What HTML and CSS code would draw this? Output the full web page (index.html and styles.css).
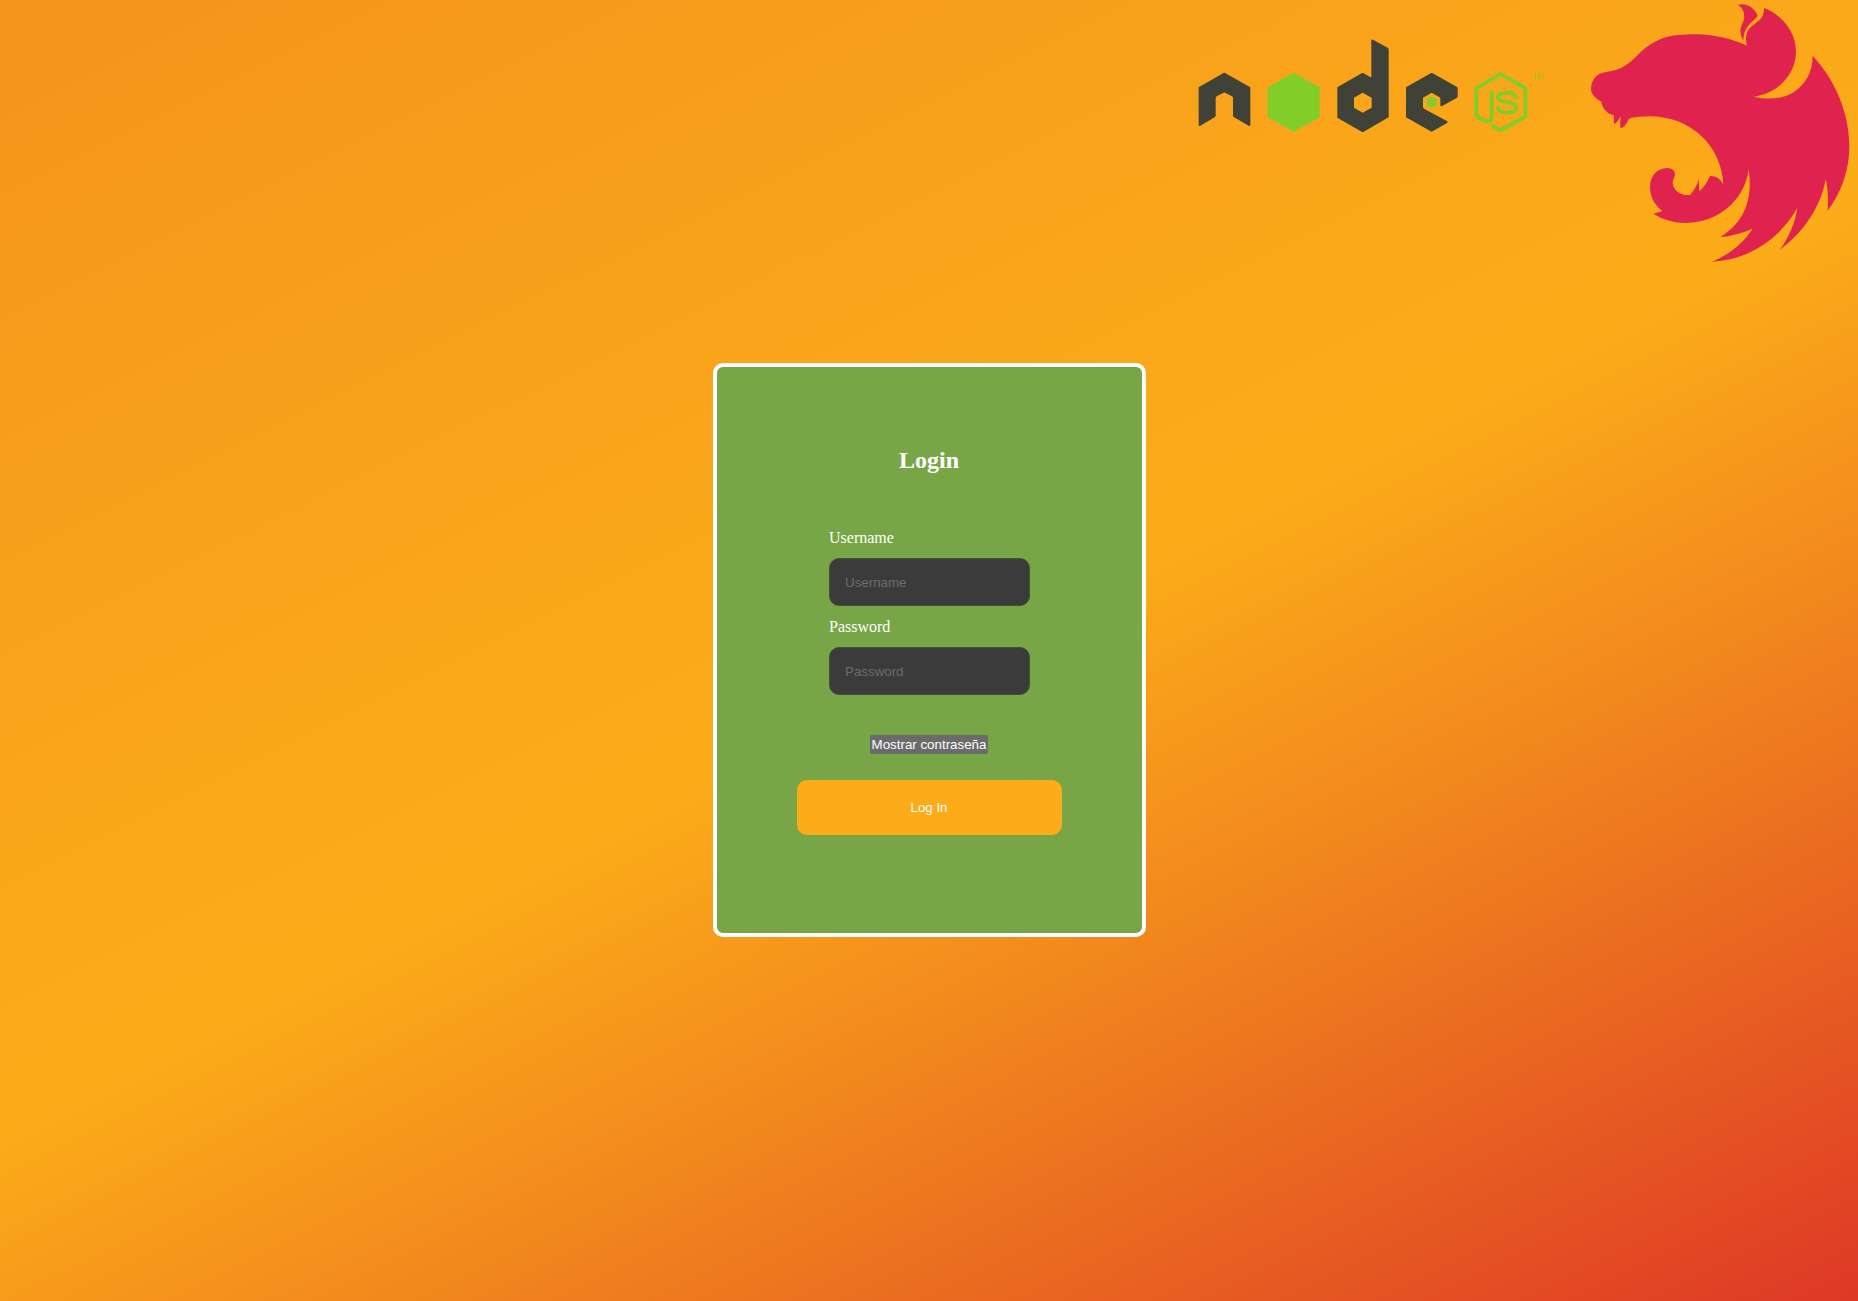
FILE: index.html
```html
<!DOCTYPE html>
<html lang="es">
<head>
<meta charset="utf-8">
<title>Login</title>
<link rel="stylesheet" href="styles.css">
</head>
<body>
<div class="page">
  <header class="logos">
    <svg class="logo-node" viewBox="0 0 1080 330" role="img" aria-label="Node.js">
      <g class="node-dark">
        <path d="M26 172 97 131Q103 126 109 131L181 172V285Q180 289 176 287L131 261Q129 259 129 256V205Q129 201 126 199L107 189Q103 186 99 189L80 199Q77 201 77 205V257L75 261 31 287Q27 289 26 286Z"/>
        <path fill-rule="evenodd" d="M544 30Q545 27 549 29L593 53Q596 55 596 58V262L521 305Q518 307 515 305L442 263V172L515 130Q518 128 521 130L540 141Q544 143 544 140ZM518 188 492 203V233L518 248 545 233V203Z"/>
        <path d="M722 130Q725 128 728 130L801 171Q803 172 803 176V198Q803 202 800 204L755 229Q751 229 751 226V203L725 188 699 203V231Q699 234 702 236L772 274Q774 277 771 279L728 304Q725 306 722 304L648 262V172Z"/>
      </g>
      <g class="node-green">
        <path d="M308 130Q311 128 314 130L386 170Q389 172 389 175V259Q389 262 386 264L314 304Q311 306 308 304L236 264Q233 262 233 259V175Q233 172 236 170Z"/>
        <path d="M725 200 740 208V226L725 234 710 226V208Z"/>
        <text x="1028" y="146" class="node-tm">TM</text>
      </g>
      <g class="node-line">
        <path d="M905 286 929 299Q932 301 935 299L1003 261Q1006 259 1006 256V178Q1006 175 1003 173L935 134Q932 132 929 134L862 173Q859 175 859 178V256Q859 259 862 261L881 271Q905 281 905 258V183"/>
        <path d="M978 207Q977 188 951 188 924 188 924 202 924 214 951 217 978 219 978 233 978 248 951 248 923 248 923 228"/>
      </g>
    </svg>
    <svg class="logo-nest" viewBox="0 0 834 810" role="img" aria-label="Nest">
      <path d="M33 268C33 240 50 219 78 216C125 211 150 190 175 163C200 138 225 123 250 114C275 106 310 103 350 103C405 104 455 116 501 137C495 115 497 97 512 82C530 64 553 60 552 24C608 45 649 98 648 157C647 222 595 281 522 290C560 300 610 298 642 276C678 250 698 215 698 167C765 240 807 335 808 437C808 510 785 575 743 632C745 600 744 565 737 538C725 610 680 690 600 749C625 715 645 670 652 624C600 715 510 780 396 785C445 765 490 730 518 686C490 698 450 710 421 711C490 670 520 600 506 508C495 600 415 668 318 669C285 669 250 660 221 642C230 637 240 636 247 633C222 612 210 590 210 560C210 530 230 504 262 504C277 505 286 513 285 525C284 532 278 538 278 549C279 572 305 588 330 585C342 572 352 555 356 537L358 574C372 562 382 545 390 528C408 527 420 535 430 554C425 440 335 348 205 349C180 350 165 351 147 356C140 370 133 383 122 384C119 375 121 360 122 349C117 358 110 370 103 372C100 365 102 355 101 346C80 340 67 325 64 305C55 300 34 288 33 268Z"/>
      <path d="M474 15C500 7 525 25 533 48C520 66 492 75 490 122C478 100 480 85 488 69C498 50 492 25 474 15Z"/>
    </svg>
  </header>
  <main class="card">
    <h1 class="title">Login</h1>
    <form class="form">
      <div class="fields">
        <label class="label" for="username">Username</label>
        <input class="input" id="username" type="text" placeholder="Username">
        <label class="label" for="password">Password</label>
        <input class="input" id="password" type="password" placeholder="Password">
      </div>
      <button class="toggle" type="button">Mostrar contraseña</button>
      <button class="submit" type="submit">Log In</button>
    </form>
  </main>
</div>
</body>
</html>
```
FILE: styles.css
```css
* {
  box-sizing: border-box;
}

body {
  margin: 0;
  font-family: "Liberation Serif", "Times New Roman", serif;
  font-size: 16px;
  color: #fff;
}

/* Header and card share one grid cell: the card stays centred in the window. */
.page {
  display: grid;
  grid-template-areas: "stage";
  height: 100vh;
  background: linear-gradient(153.5deg, #f4941c 0%, #fcac19 50.5%, #f1841e 69%, #de3826 100%);
}

.logos {
  grid-area: stage;
  place-self: start end;
  display: flex;
  align-items: flex-start;
  gap: 30px;
}

.logo-node {
  width: 360px;
  height: 110px;
  margin-top: 30px;
}

.logo-nest {
  width: 278px;
  height: 270px;
  fill: #e0234e;
}

.node-dark {
  fill: #404137;
}

.node-green {
  fill: #83cd29;
}

.node-line {
  fill: none;
  stroke: #83cd29;
  stroke-width: 12;
}

.node-tm {
  font: 22px "Liberation Sans", Arial, sans-serif;
}

.card {
  grid-area: stage;
  place-self: center;
  width: 433px;
  height: 574px;
  margin-bottom: 1px;
  padding-top: 79px;
  border: 4px solid #fff;
  border-radius: 10px;
  background: #78a646;
}

.title {
  margin: 0 0 54px;
  font-size: 24px;
  line-height: 28px;
  text-align: center;
}

.form {
  display: flex;
  flex-direction: column;
  align-items: center;
}

.fields {
  display: flex;
  flex-direction: column;
  width: 201px;
  margin: 0 0 40px 1px;
}

.label {
  line-height: 20px;
  margin-bottom: 10px;
}

.input {
  height: 48px;
  padding: 0 15px;
  border: 1px solid #455037;
  border-radius: 10px;
  background: #3b3b3b;
  color: #fff;
  font: 13.333px "Liberation Sans", Arial, sans-serif;
}

.input + .label {
  margin-top: 11px;
}

.input::placeholder {
  color: #6c6c6c;
}

.toggle,
.submit {
  padding: 0;
  border: 0;
  color: #fff;
  font: 13.333px "Liberation Sans", Arial, sans-serif;
}

.toggle {
  width: 118px;
  height: 19px;
  margin-bottom: 26px;
  border-radius: 2px;
  background: #6b6b6b;
}

.submit {
  width: 265px;
  height: 55px;
  border-radius: 10px;
  background: #fcac19;
}
```
